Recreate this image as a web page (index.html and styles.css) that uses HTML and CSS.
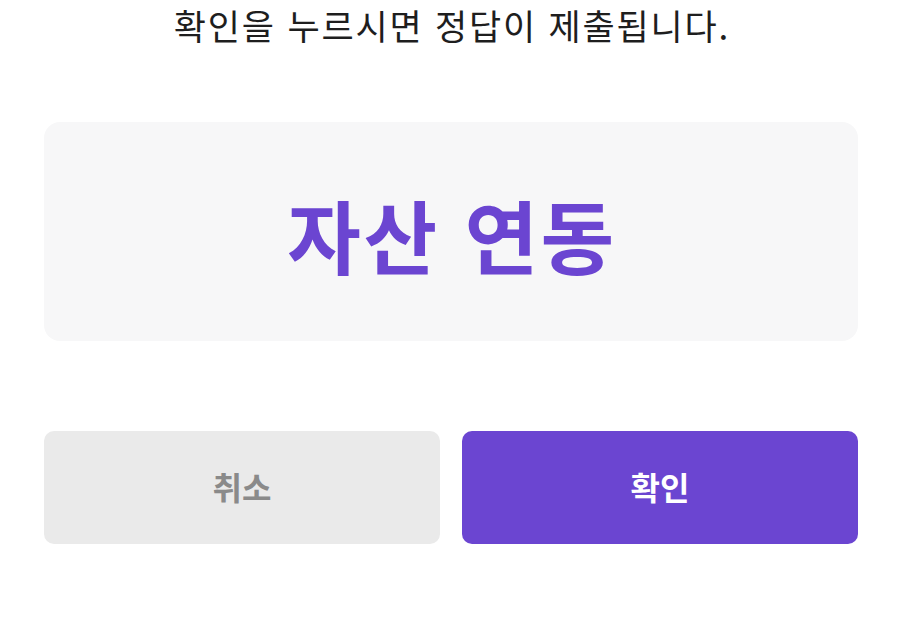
FILE: index.html
```html
<!DOCTYPE html>
<html lang="ko">
<head>
<meta charset="utf-8">
<link rel="stylesheet" href="styles.css">
</head>
<body>
<div class="page">
  <p class="notice">확인을 누르시면 정답이 제출됩니다.</p>
  <div class="answer-card">
    <span class="answer">자산 연동</span>
  </div>
  <div class="actions">
    <button class="btn btn-cancel">취소</button>
    <button class="btn btn-confirm">확인</button>
  </div>
</div>
</body>
</html>
```
FILE: styles.css
```css
html, body {
  margin: 0;
  padding: 0;
  background: #ffffff;
}
body {
  font-family: "Noto Sans CJK KR", "Noto Sans", sans-serif;
}
.page {
  width: 900px;
  height: 632px;
  box-sizing: border-box;
  padding: 0 42px 0 44px;
  display: flex;
  flex-direction: column;
}
.notice {
  margin: 0;
  height: 56px;
  line-height: 50px;
  text-align: center;
  font-size: 35px;
  color: #1e1e1e;
  letter-spacing: 1.8px;
  padding-left: 2px;
}
.answer-card {
  margin-top: 66px;
  height: 219px;
  border-radius: 16px;
  background: #f7f7f8;
  display: flex;
  align-items: center;
  justify-content: center;
}
.answer {
  font-size: 80px;
  font-weight: 700;
  color: #6b45d1;
  letter-spacing: 2.5px;
  line-height: 1;
  padding-top: 2px;
  padding-left: 2px;
}
.actions {
  margin-top: 90px;
  display: flex;
  gap: 22px;
}
.btn {
  flex: 1;
  height: 113px;
  border: none;
  border-radius: 10px;
  font-family: inherit;
  font-size: 32px;
  font-weight: 700;
  padding: 0 0 3px;
}
.btn-cancel {
  background: #eaeaea;
  color: #8a8a8a;
}
.btn-confirm {
  background: #6b45d1;
  color: #ffffff;
}
```
